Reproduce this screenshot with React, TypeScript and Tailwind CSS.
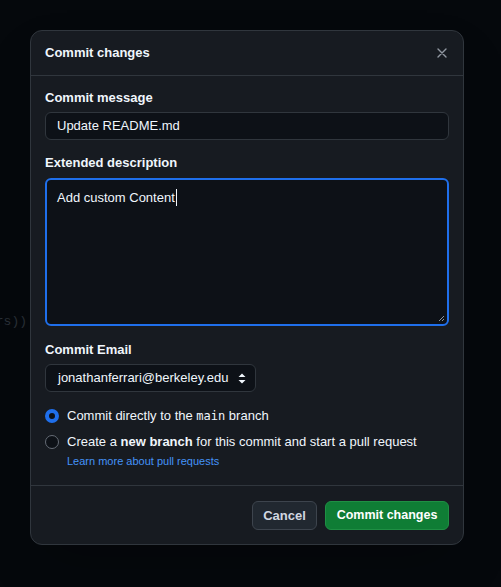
import React from "react";

const font = { fontFamily: "'Liberation Sans', Arial, sans-serif" };

const Radio = ({ checked }: { checked?: boolean }) =>
  checked ? (
    <span className="w-[14px] h-[14px] rounded-full border-[4px] border-[#1f6feb] bg-[#0d1117] shrink-0" />
  ) : (
    <span className="w-[14px] h-[14px] rounded-full border border-[#656c76] bg-[#0d1117] shrink-0" />
  );

export default function App() {
  return (
    <div
      className="relative w-[501px] h-[587px] bg-[#05080c] overflow-hidden pt-[30px] pl-[30px] text-[#f0f6fc]"
      style={font}
    >
      <span className="absolute left-[-12px] top-[312px] text-[13px] text-[#2a3038] font-mono">
        ors))
      </span>

      <div className="relative w-[434px] bg-[#171b21] border border-[#30363d] rounded-xl shadow-2xl">
        {/* header */}
        <div className="h-[45px] flex items-center justify-between px-[14px] border-b border-[#30363d]">
          <h2 className="text-[13px] font-bold">Commit changes</h2>
          <svg width="10" height="10" viewBox="0 0 10 10" className="mr-[2px]">
            <path d="M1 1l8 8M9 1l-8 8" stroke="#9198a1" strokeWidth="1.4" strokeLinecap="round" />
          </svg>
        </div>

        {/* body */}
        <div className="px-[14px] pt-[13px] pb-[16px]">
          <label className="block text-[13px] font-bold leading-[18px]">Commit message</label>
          <div className="mt-[5px] h-[28px] rounded-md border border-[#30363d] bg-[#0d1117] flex items-center px-[11px] text-[13px]">
            Update README.md
          </div>

          <label className="block mt-[14px] text-[13px] font-bold leading-[18px]">
            Extended description
          </label>
          <div className="relative mt-[6px] h-[148px] rounded-md border-2 border-[#1f6feb] bg-[#0d1117] px-[10px] pt-[8px] text-[13px] leading-[20px]">
            Add custom Content
            <span className="inline-block w-px h-[17px] bg-[#f0f6fc] align-middle ml-[1px] -mt-[2px]" />
            <svg width="7" height="7" viewBox="0 0 7 7" className="absolute right-[2px] bottom-[2px]">
              <path d="M6 1L1 6M6 4L4 6" stroke="#8b949e" strokeWidth="1" />
            </svg>
          </div>

          <label className="block mt-[15px] text-[13px] font-bold leading-[18px]">Commit Email</label>
          <div className="mt-[5px] w-[211px] h-[28px] rounded-md border border-[#30363d] bg-[#0d1117] flex items-center justify-between pl-[12px] pr-[9px] text-[13px]">
            <span>jonathanferrari@berkeley.edu</span>
            <svg width="8" height="11" viewBox="0 0 8 11">
              <path d="M4 0.5L7.5 4H0.5z M4 10.5L7.5 7H0.5z" fill="#f0f6fc" />
            </svg>
          </div>

          <div className="mt-[14px] flex items-center gap-[8px] text-[13px] h-[20px]">
            <Radio checked />
            <span>
              Commit directly to the{" "}
              <code className="text-[12px]" style={{ fontFamily: "'DejaVu Sans Mono', monospace" }}>
                main
              </code>{" "}
              branch
            </span>
          </div>
          <div className="mt-[6px] flex items-center gap-[8px] text-[13px] h-[20px] whitespace-nowrap">
            <Radio />
            <span>
              Create a <b className="font-bold">new branch</b> for this commit and start a pull request
            </span>
          </div>
          <div className="pl-[22px] text-[11px] leading-[16px] text-[#4493f8] mt-[1px]">
            Learn more about pull requests
          </div>
        </div>

        {/* footer */}
        <div className="border-t border-[#30363d] flex justify-end gap-[8px] px-[14px] pt-[15px] pb-[14px]">
          <button className="w-[65px] h-[29px] rounded-md bg-[#212830] border border-[#3d444d] text-[13px] font-bold text-[#d1d7e0]">
            Cancel
          </button>
          <button className="w-[124px] h-[29px] rounded-md bg-[#0f7d35] border border-[#1f8f44] text-[12.5px] font-bold text-white">
            Commit changes
          </button>
        </div>
      </div>
    </div>
  );
}
